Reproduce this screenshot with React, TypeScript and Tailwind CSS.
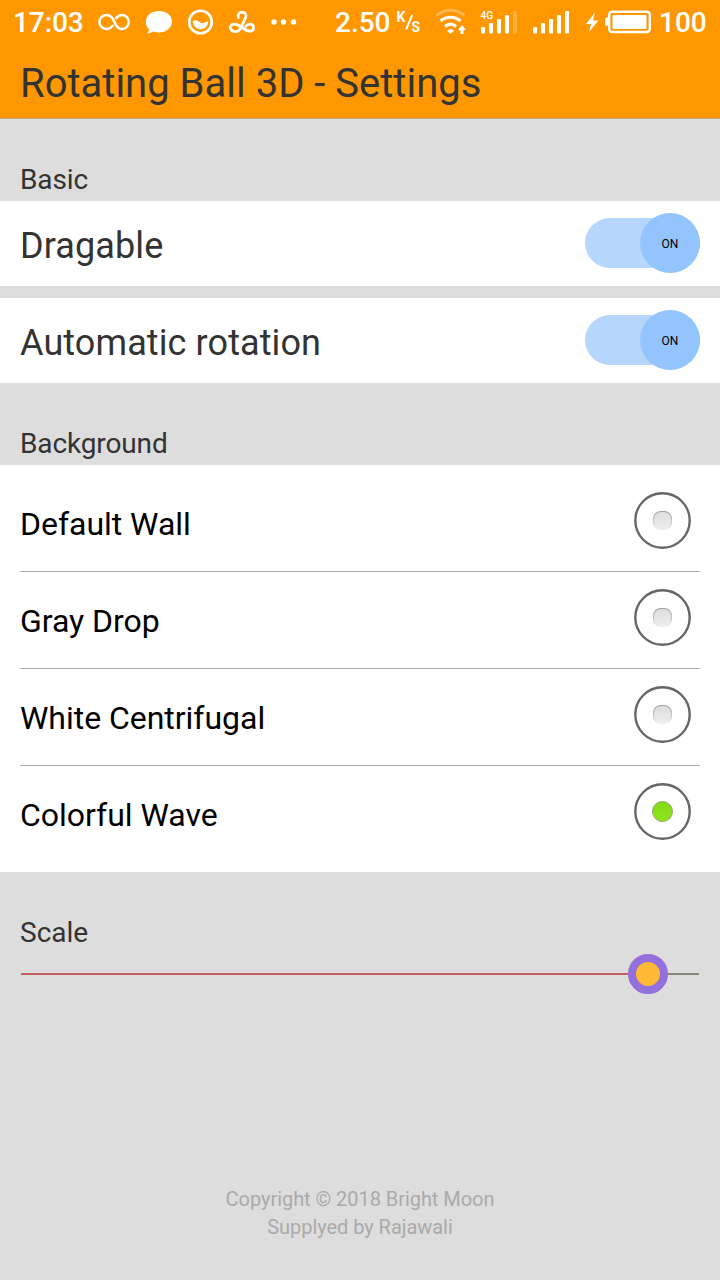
import React from "react";

const radios = ["Default Wall", "Gray Drop", "White Centrifugal", "Colorful Wave"];

function StatusBar() {
  return (
    <div className="flex h-[44px] items-center pl-[13px] text-[28px] leading-[44px] font-medium text-white">
      <span className="w-[84px] pt-[2px] tracking-[-0.1px] whitespace-nowrap">17:03</span>
      <svg className="h-[44px] w-[238px] shrink-0" viewBox="97 0 238 44" fill="none" stroke="#fff">
        <path d="M112.800 25.800C110.800 28.200 108.800 29 106.500 29C102.500 29 99.400 25.900 99.400 22C99.400 18.100 102.500 15 106.500 15C109 15 110.800 16.200 112.300 18L116.300 25.500C117.800 27.800 119.500 29 122 29C125.900 29 128.700 25.900 128.700 22C128.700 18.100 125.800 15 122 15C119.500 15 117.600 16.200 116 18.300" strokeWidth="2.500" strokeLinecap="round" />
        <path d="M159 11c7.500 0 13 4.500 13 10.500S166.500 32.500 159 32.500c-2 0-4-.4-5.700-1-1.500 1-3.500 1.900-6.300 2 1.300-1.200 2-2.500 2-4.200-2-2-3.200-4.300-3.200-7.300C145.800 15.500 151.500 11 159 11Z" fill="#fff" stroke="none" />
        <circle cx="200.500" cy="22" r="11.300" strokeWidth="2.600" />
        <path d="M192.800 20.800C195.500 19.500 197.500 20.300 199.500 22C201.500 23.600 203 23.400 204.500 22.500C206 21.500 207.300 21.300 208.300 21.700C208 26 204.800 29.200 200.500 29.200C196.200 29.200 192.800 25.600 192.800 20.800Z" fill="#fff" stroke="none" />
        <path d="M238.400 17.500C237.400 14.500 239.200 12.200 242 12.200C245.200 12.200 246.800 14.700 245.600 17.500L241.300 27C239.800 30.300 237.400 32 234.500 31.600C230.800 31 229.200 27.300 231.300 25.200C233.800 22.900 237.300 24.300 241.500 27C245 29.300 248.200 32.300 251.400 31C254.400 29.700 254.300 25.200 251.200 24.300C249 23.700 247.200 24.500 245.800 26.200" strokeWidth="2.800" strokeLinecap="round" strokeLinejoin="round" />
        <g fill="#fff" stroke="none"><circle cx="274" cy="22" r="2.700" /><circle cx="283.500" cy="22" r="2.700" /><circle cx="293.500" cy="22" r="2.700" /></g>
      </svg>
      <span className="w-[61px] pt-[2px] whitespace-nowrap">2.50</span>
      <svg className="h-[44px] w-[263px] shrink-0" viewBox="396 0 263 44" fill="#fff">
        <text x="396.500" y="21.500" fontSize="14" fontFamily="Roboto" fontWeight="700">K</text>
        <path d="m412.300 15-6.300 14.500" stroke="#fff" strokeWidth="1.900" />
        <text x="411.500" y="32" fontSize="14" fontFamily="Roboto" fontWeight="700">S</text>
        <g fill="none" stroke="#fff" strokeWidth="3">
          <path d="M436.500 15.500C445 8.500 456 8.500 464.500 15.500" opacity=".3" />
          <path d="M440.500 21C446.500 16 454.500 16 460.500 21" />
          <path d="M445 26.500C448.500 23.500 452.500 23.500 456 26.500" />
        </g>
        <path d="M447 30.500q3.500-3 7 0L450.500 34Z" />
        <path d="m462 25 4 5h-2.500v4h-3v-4H458Z" />
        <text x="480.500" y="18.500" fontSize="10" fontFamily="Roboto" fontWeight="500">4G</text>
        <rect x="481" y="27" width="4" height="6.500" rx="1" /><rect x="489" y="23" width="4" height="10.500" rx="1" /><rect x="497" y="19" width="4" height="14.500" rx="1" /><rect x="505" y="15" width="4" height="18.500" rx="1" /><rect x="513" y="11" width="4" height="22.500" rx="1" opacity=".25" />
        <rect x="533" y="27" width="4" height="6.500" rx="1" /><rect x="541" y="23" width="4" height="10.500" rx="1" /><rect x="549" y="19" width="4" height="14.500" rx="1" /><rect x="557" y="15" width="4" height="18.500" rx="1" /><rect x="565" y="11" width="4" height="22.500" rx="1" />
        <path d="m595 12.500-9 11.500h5l-2 8 9.500-11.500H593Z" />
        <rect x="609.200" y="11.700" width="40.600" height="20.300" rx="3" fill="none" stroke="#fff" strokeWidth="2.400" />
        <rect x="612.500" y="15" width="34" height="14" rx="1" />
        <path d="M608 17.500h-1q-2 0-2 2v4.500q0 2 2 2h1Z" />
      </svg>
      <span className="pt-[2px] whitespace-nowrap">100</span>
    </div>
  );
}

function ToggleRow({ label }: { label: string }) {
  return (
    <div className="flex h-[85px] items-center justify-between bg-white px-5">
      <span className="pt-[5px] text-[36px] leading-[42px] tracking-[0.1px] text-[#333]">{label}</span>
      <div className="mb-px flex h-[50px] w-[115px] items-center justify-end rounded-full bg-[#b6d6fe]">
        <div className="flex size-[60px] shrink-0 items-center justify-center rounded-full bg-[#94c4fe] pt-[2px] text-[12px] text-black">ON</div>
      </div>
    </div>
  );
}

function Radio({ on }: { on: boolean }) {
  return (
    <svg className="mr-[9px] mb-[6px] size-[57px]" viewBox="0 0 57 57">
      <defs>
        <linearGradient id="idle" x1="0" y1="0" x2="0" y2="1"><stop stopColor="#dddddd" /><stop offset="1" stopColor="#eeeeee" /></linearGradient>
        <linearGradient id="idleEdge" x1="0" y1="0" x2="0" y2="1"><stop stopColor="#a0a0a0" /><stop offset=".6" stopColor="#cccccc" /><stop offset="1" stopColor="#f0f0f0" /></linearGradient>
        <linearGradient id="active" x1="0" y1="0" x2="0" y2="1"><stop stopColor="#83d916" /><stop offset="1" stopColor="#92e51b" /></linearGradient>
      </defs>
      <circle cx="28.500" cy="28.500" r="27.200" fill="white" stroke="#666" strokeWidth="2.400" />
      {on ? <circle cx="28.500" cy="28.500" r="10" fill="url(#active)" stroke="#8fa571" strokeWidth="1" /> : <rect x="19.500" y="19.500" width="18" height="18" rx="7.500" fill="url(#idle)" stroke="url(#idleEdge)" strokeWidth="1.200" />}
    </svg>
  );
}

export default function App() {
  return (
    <div className="flex h-[1280px] w-[720px] flex-col overflow-hidden bg-[#ddd] font-['Roboto',sans-serif] text-[#333]">
      <header className="h-[119px] shrink-0 border-b border-[#c5a675] bg-[#ff9800]">
        <StatusBar />
        <h1 className="px-5 pt-[16px] text-[40px] leading-[48px]">Rotating Ball 3D - Settings</h1>
      </header>
      <h2 className="h-[82px] shrink-0 px-5 pt-[45px] text-[28px] leading-[32px] tracking-[-0.13px]">Basic</h2>
      <div className="flex flex-col gap-3">
        <ToggleRow label="Dragable" />
        <ToggleRow label="Automatic rotation" />
      </div>
      <h2 className="h-[82px] shrink-0 px-5 pt-[45px] text-[28px] leading-[32px] tracking-[-0.13px]">Background</h2>
      <div className="h-[407px] shrink-0 bg-white px-5 pt-[10px] text-[32px] text-black">
        {radios.map((label, i) => (
          <div key={label} className="flex h-[97px] items-center justify-between border-b border-[#aaa] last:border-transparent">
            <span className="pt-[2px] leading-[38px] tracking-[-0.03px]">{label}</span>
            <Radio on={i === 3} />
          </div>
        ))}
      </div>
      <h2 className="h-[82px] shrink-0 px-5 pt-[45px] text-[28px] leading-[32px]">Scale</h2>
      <div className="flex h-10 shrink-0 items-center px-[21px]">
        <div className="h-[2px] w-[607px] bg-[#c55f62]" />
        <div className="size-10 rounded-full border-8 border-[#9370db] bg-[#ffb935]" />
        <div className="h-[2px] flex-1 bg-[#888675]" />
      </div>
      <footer className="mt-auto pb-[39px] text-center text-[20px] leading-[28px] tracking-[-0.05px] text-[#aaa]">
        <p>Copyright © 2018 Bright Moon</p>
        <p>Supplyed by Rajawali</p>
      </footer>
    </div>
  );
}
